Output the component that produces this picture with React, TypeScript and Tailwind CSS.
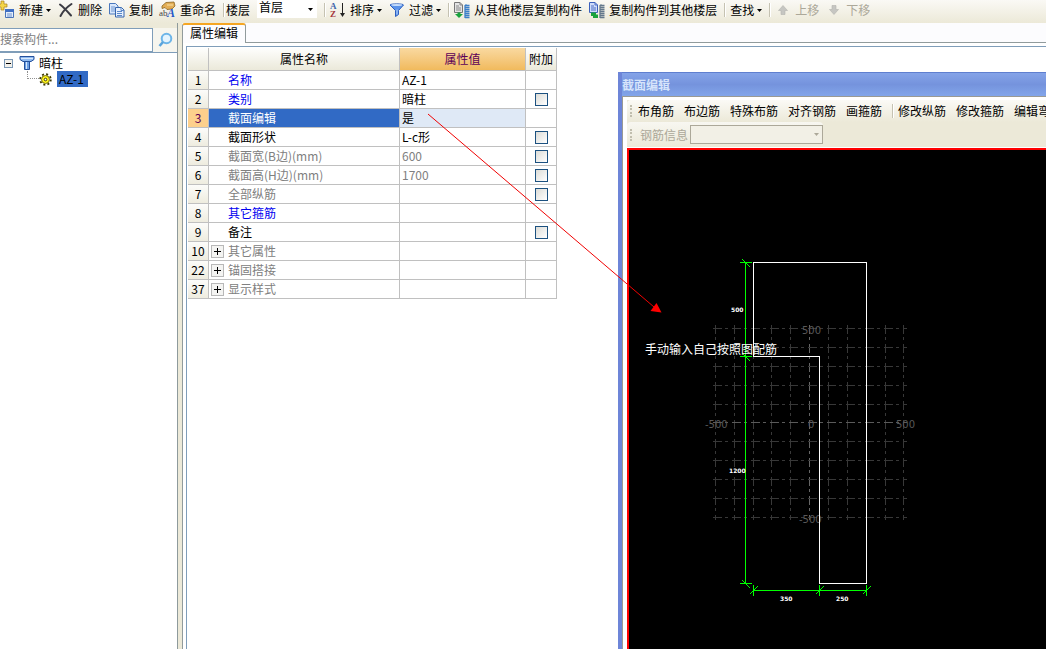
import type { ReactNode } from "react";

type Row = {
  no: number;
  name: string;
  value?: string;
  tone: "blue" | "black" | "gray";
  check?: boolean;
  group?: boolean;
  selected?: boolean;
};

const rows: Row[] = [
  { no: 1, name: "名称", value: "AZ-1", tone: "blue" },
  { no: 2, name: "类别", value: "暗柱", tone: "blue", check: true },
  { no: 3, name: "截面编辑", value: "是", tone: "black", selected: true },
  { no: 4, name: "截面形状", value: "L-c形", tone: "black", check: true },
  { no: 5, name: "截面宽(B边)(mm)", value: "600", tone: "gray", check: true },
  { no: 6, name: "截面高(H边)(mm)", value: "1700", tone: "gray", check: true },
  { no: 7, name: "全部纵筋", tone: "gray", check: true },
  { no: 8, name: "其它箍筋", tone: "blue" },
  { no: 9, name: "备注", tone: "black", check: true },
  { no: 10, name: "其它属性", tone: "gray", group: true },
  { no: 22, name: "锚固搭接", tone: "gray", group: true },
  { no: 37, name: "显示样式", tone: "gray", group: true },
];

const tones = {
  blue: "text-[#0000f0]",
  black: "text-black",
  gray: "text-[#808080]",
};

/* ---------- icons ---------- */

function Svg({ children }: { children: ReactNode }) {
  return (
    <svg width="16" height="16" viewBox="0 0 16 16" fill="none" className="shrink-0 overflow-visible" aria-hidden="true">
      {children}
    </svg>
  );
}

const NewIcon = () => (
  <Svg>
    <path d="M2 -1h3v3h3v3H5v3H2V5H-1V2h3z" fill="#f4d548" stroke="#a8801c" strokeWidth=".7" />
    <path d="M6.500 7.500h8v8h-8z" fill="#e4eefc" stroke="#4a74b8" />
    <path d="M6 7h9v3H6z" fill="#3f6fc4" />
    <path d="M8 12h5M8 14h5" stroke="#6f93cf" />
  </Svg>
);

const DeleteIcon = () => (
  <Svg>
    <path d="M2 2.500c4 3 7.500 7 11 11M13.500 2C9 5 5 9 2.500 14" stroke="#3c3c44" strokeWidth="2" strokeLinecap="round" />
  </Svg>
);

const CopyIcon = () => (
  <Svg>
    <path d="M.5 1.500h6l2.500 2.500v8h-8.500z" fill="#d9e7fb" stroke="#4b78bd" />
    <path d="M2 5h4M2 7h4M2 9h4" stroke="#6f97d2" />
    <path d="M6.500 5.500h6l2.500 2.500v7h-8.500z" fill="#e7f0fd" stroke="#3565ad" />
    <path d="M12 5.500v3h3M8 9.500h5M8 11.500h5M8 13.500h5" stroke="#5b88ca" />
  </Svg>
);

const RenameIcon = () => (
  <Svg>
    <path d="M2 4L6 .500 14 0l1 4-3 3-5 .500-2-2-3 1z" fill="#e3ae55" stroke="#8a6420" strokeWidth=".8" />
    <path d="M7 3h6" stroke="#f8e2a8" />
    <text x="-1" y="14" fontSize="9" fill="#454545" fontFamily="Liberation Serif, serif">ab</text>
    <text x="7" y="15" fontSize="12" fontWeight="bold" fontStyle="italic" fill="#2458c8" fontFamily="Liberation Serif, serif">A</text>
  </Svg>
);

const SortIcon = () => (
  <Svg>
    <text x="0" y="7" fontSize="9" fontWeight="bold" fill="#3f66ac" fontFamily="Liberation Serif, serif">A</text>
    <text x="0" y="15" fontSize="9" fontWeight="bold" fill="#a5383c" fontFamily="Liberation Serif, serif">Z</text>
    <path d="M12.500 1v12" stroke="#222" />
    <path d="M10 11h5L12.500 15z" fill="#222" />
  </Svg>
);

const FilterIcon = () => (
  <Svg>
    <path d="M1 3C1 1.500 14.500 1.500 14.500 3L9.500 8.500v4L6.500 14.500v-6z" fill="#5b93ea" stroke="#2c5fc0" />
    <ellipse cx="7.700" cy="3.100" rx="5.500" ry="1" fill="#c5dcfb" />
    <path d="M8 7.500v5" stroke="#b5d2fa" />
  </Svg>
);

function FloorCopyIcon({ outgoing = false }: { outgoing?: boolean }) {
  return (
    <Svg>
      <path d="M.5 .5h5.500L8.500 3v7.500H.5z" fill={outgoing ? "#cfdcfa" : "#e4e4e4"} stroke={outgoing ? "#3c61bd" : "#777"} />
      <path d="M6 .5V3h2.500M2 4h3M2 6h5M2 8h5" stroke={outgoing ? "#4a6cc4" : "#888"} />
      <path d={outgoing ? "M2 10.500h5v2h2v3.500H4v-2H2z" : "M1 12h2.500v-1.500h3V12H9l-4 4z"} fill="#19a33c" />
      <path
        d="M11 16V3.500l1.500-1M11 3.500h4.500M11 5.500h4.500M11 7.500h4.500M11 9.500h4.500M11 11.500h4.500M11 13.500h4.500M11 15.500h4.500"
        stroke={outgoing ? "#64788c" : "#3c7fc8"}
        strokeWidth="1.300"
      />
    </Svg>
  );
}

function MoveIcon({ down = false }: { down?: boolean }) {
  return (
    <Svg>
      <path
        d={down ? "M6 3.500h4v4h2.500L8 12.500 3.500 7.500H6z" : "M6 12.500h4v-4h2.500L8 3.500 3.500 8.500H6z"}
        fill="#c6c6c2"
        stroke="#b4b4ae"
        strokeWidth=".6"
      />
    </Svg>
  );
}

const Caret = () => (
  <svg width="5" height="3" viewBox="0 0 5 3" className="shrink-0" aria-hidden="true">
    <path d="M0 0h5L2.500 3z" fill="currentColor" />
  </svg>
);

/* ---------- toolbar ---------- */

const Sep = () => <span className="h-3.5 w-0.5 shrink-0 border-r border-l border-r-white border-l-[#c5c2b2]" />;

function ToolButton({ icon, label, caret, disabled }: { icon?: ReactNode; label: string; caret?: boolean; disabled?: boolean }) {
  return (
    <button type="button" disabled={disabled} className="flex shrink-0 items-center gap-[3px] whitespace-nowrap disabled:text-[#aca899]">
      {icon && <span className="pr-px">{icon}</span>}
      <span>{label}</span>
      {caret && <Caret />}
    </button>
  );
}

function Toolbar() {
  return (
    <header className="-ml-px flex h-[23px] shrink-0 items-center gap-[7px] overflow-hidden bg-linear-to-b from-[#faf9f5] to-[#ece9d8] pb-[3px]">
      <ToolButton icon={<NewIcon />} label="新建" caret />
      <ToolButton icon={<DeleteIcon />} label="删除" />
      <ToolButton icon={<CopyIcon />} label="复制" />
      <ToolButton icon={<RenameIcon />} label="重命名" />
      <div className="flex shrink-0 items-center gap-px">
        <Sep />
        <label htmlFor="floor">楼层</label>
      </div>
      <div className="relative h-full w-[60px] shrink-0">
        <select id="floor" className="block h-[18px] w-full appearance-none bg-white pb-1 pl-0.5 leading-[14px] outline-none">
          <option>首层</option>
        </select>
        <span className="pointer-events-none absolute top-2 right-1">
          <Caret />
        </span>
      </div>
      <div className="flex shrink-0 items-center gap-1">
        <Sep />
        <ToolButton icon={<SortIcon />} label="排序" caret />
      </div>
      <ToolButton icon={<FilterIcon />} label="过滤" caret />
      <div className="flex shrink-0 items-center gap-1">
        <Sep />
        <ToolButton icon={<FloorCopyIcon />} label="从其他楼层复制构件" />
      </div>
      <ToolButton icon={<FloorCopyIcon outgoing />} label="复制构件到其他楼层" />
      <div className="flex shrink-0 items-center gap-1">
        <Sep />
        <ToolButton label="查找" caret />
      </div>
      <div className="flex shrink-0 items-center gap-1">
        <Sep />
        <ToolButton icon={<MoveIcon />} label="上移" disabled />
      </div>
      <ToolButton icon={<MoveIcon down />} label="下移" disabled />
    </header>
  );
}

/* ---------- component tree ---------- */

function Sidebar() {
  return (
    <aside className="flex w-[178px] shrink-0 flex-col border-r border-[#8e9a9c]">
      <div className="flex h-[30px] items-end border-b border-[#7f9db9]">
        <input
          type="text"
          aria-label="搜索构件"
          placeholder="搜索构件..."
          className="h-6 w-[153px] border border-l-0 border-[#7f9db9] bg-white pb-1 outline-none placeholder:text-[#808080]"
        />
        <button type="button" aria-label="搜索" className="flex h-6 flex-1 items-center justify-center bg-[#f6f5ee]">
          <svg width="16" height="16" viewBox="0 0 16 16" fill="none" aria-hidden="true">
            <circle cx="9.500" cy="6.500" r="4.800" fill="#e4f4fe" stroke="#6db5e8" strokeWidth="2" />
            <path d="M6 10l-3.500 4" stroke="#5aa4dc" strokeWidth="2.600" />
          </svg>
        </button>
      </div>
      <div className="flex-1 bg-white pt-0.5 pl-1">
        <div className="flex h-4 items-center">
          <svg width="9" height="9" viewBox="0 0 9 9" aria-hidden="true">
            <rect x=".5" y=".5" width="8" height="8" fill="#f2f0ea" stroke="#7b98b5" />
            <path d="M2 4.500h5" stroke="#000" />
          </svg>
          <svg width="16" height="16" viewBox="0 0 16 16" className="ml-1.5" aria-hidden="true">
            <path d="M1 1.500h14v3l-3 2H4l-3-2z" fill="#8fbaf0" stroke="#24509c" />
            <path d="M2 3.500h12" stroke="#d7e8fc" />
            <path d="M5.500 6.500h5v8h-5z" fill="#6c9fe4" stroke="#24509c" />
            <path d="M7.500 7v7" stroke="#d7e8fc" />
          </svg>
          <span className="ml-1">暗柱</span>
        </div>
        <div className="flex h-4 items-center pl-[23px]">
          <span className="mb-2 h-2 w-3 border-b border-l border-dotted border-[#909090]" />
          <svg width="13" height="13" viewBox="0 0 13 13" aria-hidden="true">
            <circle cx="6.500" cy="6.500" r="5.300" fill="none" stroke="#3c3800" strokeWidth="1.800" strokeDasharray="2 2.160" />
            <circle cx="6.500" cy="6.500" r="4" fill="#fdf31c" stroke="#5c5400" strokeWidth=".8" />
            <circle cx="6.500" cy="6.500" r="1.300" fill="#fff" stroke="#3c3800" />
          </svg>
          <span className="ml-[5px] w-[31px] bg-[#316ac5] pl-0.5 leading-4">AZ-1</span>
        </div>
      </div>
    </aside>
  );
}

/* ---------- property table ---------- */

const head = "h-[23px] border-r border-b border-[#c0c0c0] bg-linear-to-b from-[#fefefd] to-[#ebe9da] p-0 font-normal";
const cell = "h-[19px] border-r border-b border-[#c0c0c0] p-0 leading-4";

function PropertyTable() {
  return (
    <table className="w-[369px] table-fixed border-separate border-spacing-0">
      <thead>
        <tr>
          <th className={`${head} w-[21px]`} />
          <th className={`${head} w-[191px]`}>属性名称</th>
          <th className="h-[23px] w-[126px] border-r border-b border-[#c0c0c0] bg-linear-to-b from-[#f9d9a0] to-[#f1ba5c] p-0 font-normal text-[#5c0058]">
            属性值
          </th>
          <th className={`${head} w-[31px]`}>附加</th>
        </tr>
      </thead>
      <tbody>
        {rows.map((row) => (
          <tr key={row.no}>
            <td
              className={`${cell} text-center ${
                row.selected ? "bg-[#fdd08c] text-[#5c0058]" : "bg-linear-to-b from-[#fcfcfa] to-[#eeecdf]"
              }`}
            >
              {row.no}
            </td>
            <td className={`${cell} ${row.selected ? "bg-[#316ac5] text-white" : tones[row.tone]}`}>
              <div className="flex items-center">
                <span className="flex w-[19px] pl-0.5">
                  {row.group && (
                    <button
                      type="button"
                      aria-label={row.name}
                      className="flex size-[13px] items-center justify-center border border-[#b8b8b8] bg-[#f4f4f2]"
                    >
                      <svg width="7" height="7" viewBox="0 0 7 7" aria-hidden="true">
                        <path d="M0 3.500h7M3.500 0v7" stroke="#000" />
                      </svg>
                    </button>
                  )}
                </span>
                {row.name}
              </div>
            </td>
            <td
              className={`${cell} pl-0.5 ${row.selected ? "bg-[#dfe9f6]" : ""} ${
                row.tone === "gray" ? "text-[#808080]" : "text-black"
              }`}
            >
              {row.value}
            </td>
            <td className={cell}>
              {row.check && (
                <input
                  type="checkbox"
                  aria-label={`${row.name} 附加`}
                  className="mx-auto block size-[13px] appearance-none border border-[#1c5180] bg-linear-to-br from-[#dcdcd7] to-white"
                />
              )}
            </td>
          </tr>
        ))}
      </tbody>
    </table>
  );
}

/* ---------- section editor window ---------- */

const gridX = [715, 734, 753, 771, 790, 809, 828, 847, 866, 885, 903];
const gridY = [328, 347, 366, 385, 404, 422, 441, 460, 479, 498, 517];

function SectionDrawing() {
  return (
    <svg width="417" height="499" viewBox="629 150 417 499" className="block" fontFamily="DejaVu Sans, sans-serif">
      <g strokeDasharray="9 3 3 4" shapeRendering="crispEdges">
        {gridX.map((x) => (
          <path key={x} d={`M${x + 0.5} 325V520`} stroke={x === 809 ? "#666" : "#383838"} />
        ))}
        {gridY.map((y) => (
          <path key={y} d={`M713 ${y + 0.5}H907`} stroke={y === 422 ? "#5a5a5a" : "#383838"} />
        ))}
      </g>
      <g fill="#585858" fontSize="10">
        <text x="802" y="334">500</text>
        <text x="705" y="428">-500</text>
        <text x="808" y="428">0</text>
        <text x="896" y="428">500</text>
        <text x="799" y="523">-500</text>
      </g>
      <path
        d="M753.5 262.500H866.500V583.500H819.500V356.500H753.500Z"
        fill="none"
        stroke="#fff"
        shapeRendering="crispEdges"
      />
      {/* dimension lines */}
      <g stroke="#00ff00" fill="none">
        <path
          d="M745.5 262V584M740 262.500h12M740 356.500h12M740 583.500h12M753 590.500H867M753.500 585v11M819.500 585v11M866.500 585v11"
          shapeRendering="crispEdges"
        />
        <path d="M742 259l8 8M742 353l8 8M742 580l8 8M750 594l8-8M816 594l8-8M863 594l8-8" />
      </g>
      <g fill="#fff" fontSize="6" fontWeight="bold">
        <text x="731" y="312">500</text>
        <text x="729" y="473">1200</text>
        <text x="780" y="601">350</text>
        <text x="836" y="601">250</text>
      </g>
      <text x="645" y="354" fontSize="12" fill="#fff" fontFamily="Noto Sans CJK SC, sans-serif">
        手动输入自己按照图配筋
      </text>
    </svg>
  );
}

const Grip = () => <span className="h-3 w-0.5 shrink-0 border-l-2 border-dotted border-[#c1beae]" />;

function SectionWindow() {
  const left = ["布角筋", "布边筋", "特殊布筋", "对齐钢筋", "画箍筋"];
  const right = ["修改纵筋", "修改箍筋", "编辑弯钩"];
  return (
    <section className="absolute top-[72px] right-0 bottom-0 left-[618px] flex flex-col overflow-hidden border-l-4 border-[#6d85d8] bg-white">
      <h2 className="h-6 shrink-0 border-t border-[#5f7fcf] bg-linear-to-b from-[#84a3e8] via-[#7593dd] to-[#82a5ea] leading-[23px] font-bold text-[#d6e4fb]">
        截面编辑
      </h2>
      <div className="flex min-h-0 flex-1 flex-col border-t border-l border-[#9a9a94] pt-[3px] pl-1">
        <div className="shrink-0 bg-[#ece9d8]">
          <div className="flex h-[22px] items-center gap-2.5 overflow-hidden rounded-l bg-linear-to-b from-[#fbfaf6] to-[#ece9d8] pl-[3px]">
            <div className="flex shrink-0 items-center gap-1.5">
              <Grip />
              <ToolButton label={left[0]} />
            </div>
            {left.slice(1).map((label) => (
              <ToolButton key={label} label={label} />
            ))}
            <div className="flex shrink-0 items-center gap-1">
              <Sep />
              <ToolButton label={right[0]} />
            </div>
            {right.slice(1).map((label) => (
              <ToolButton key={label} label={label} />
            ))}
          </div>
          <div className="flex h-[25px] w-[196px] items-center rounded bg-linear-to-b from-[#f8f7f1] to-[#ece9d8] pl-[3px] text-[#aca899]">
            <Grip />
            <label htmlFor="rebar" className="ml-2">钢筋信息</label>
            <div className="relative ml-0.5 flex-1">
              <select id="rebar" disabled className="block h-[19px] w-full appearance-none border border-[#aca899] bg-[#f2f0e6]">
                <option />
              </select>
              <span className="pointer-events-none absolute top-2 right-1">
                <Caret />
              </span>
            </div>
          </div>
        </div>
        <div className="mt-px min-h-0 flex-1 overflow-hidden border-t-2 border-l-2 border-[#ff0000] bg-black">
          <SectionDrawing />
        </div>
      </div>
    </section>
  );
}

export default function App() {
  return (
    <div className="relative flex h-screen flex-col overflow-hidden bg-[#ece9d8] font-['Noto_Sans_CJK_SC',sans-serif] text-[12px] leading-4 text-black">
      <Toolbar />
      <div className="flex min-h-0 flex-1 gap-1">
        <Sidebar />
        <main className="flex min-w-0 flex-1 flex-col bg-white">
          <div className="flex h-5 shrink-0 bg-[#fcfcfe]">
            <button
              type="button"
              className="h-full shrink-0 rounded-t-[3px] border-t-2 border-r border-l border-t-[#f5a623] border-r-[#919b9c] border-l-[#919b9c] bg-[#fcfcfe] px-[7px] pb-0.5 leading-4"
            >
              属性编辑
            </button>
            <span className="flex-1 border-b border-[#919b9c]" />
          </div>
          <div className="flex min-h-0 flex-1 flex-col border-l border-[#919b9c] pt-[3px] pl-[3px]">
            <div className="flex-1 border-t border-l border-[#7f9db9] pt-px pl-px">
              <PropertyTable />
            </div>
          </div>
        </main>
      </div>
      <SectionWindow />
      {/* callout arrow from the table row to the editor window */}
      <svg width="240" height="206" viewBox="426 110 240 206" className="pointer-events-none absolute top-[110px] left-[426px]" aria-hidden="true">
        <path d="M428 114L654 307" stroke="#f00000" />
        <path d="M650.500 311L656.500 303L661.500 312.500Z" fill="#ff0000" />
      </svg>
    </div>
  );
}
